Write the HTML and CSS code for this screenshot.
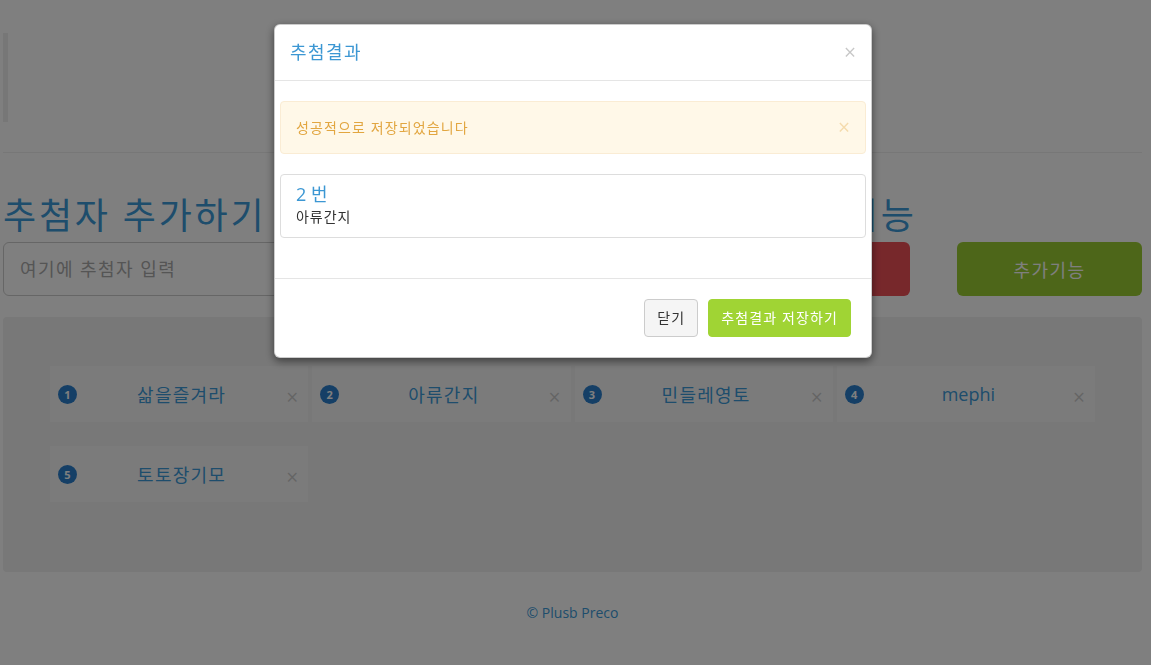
FILE: index.html
```html
<!DOCTYPE html>
<html lang="ko">
  <head>
    <meta charset="UTF-8" />
    <meta name="viewport" content="width=device-width, initial-scale=1.0" />
    <title>추첨</title>
    <link rel="stylesheet" href="styles.css">
  </head>
  <body>
    <div class="page">
      <div class="notice"></div>
      <hr class="divider">
      <div class="main">
        <section class="add-box">
          <h1 class="title">추첨자 추가하기</h1>
          <input class="name-input" type="text" placeholder="여기에 추첨자 입력">
        </section>
        <section class="tool-box">
          <h1 class="title">당첨자 기능</h1>
          <div class="tool-btns">
            <button class="btn-big btn-red">추첨하기</button>
            <button class="btn-big btn-green">추가기능</button>
          </div>
        </section>
      </div>
      <div class="well">
        <ul class="people">
          <li class="person"><span class="num">1</span><span class="name">삶을즐겨라</span><span class="del">&times;</span></li>
          <li class="person"><span class="num">2</span><span class="name">아류간지</span><span class="del">&times;</span></li>
          <li class="person"><span class="num">3</span><span class="name">민들레영토</span><span class="del">&times;</span></li>
          <li class="person"><span class="num">4</span><span class="name latin">mephi</span><span class="del">&times;</span></li>
          <li class="person"><span class="num">5</span><span class="name">토토장기모</span><span class="del">&times;</span></li>
        </ul>
      </div>
      <p class="copy">&copy; Plusb Preco</p>
    </div>

    <!-- 추첨 결과 모달 -->
    <div class="backdrop"></div>
    <div class="modal">
      <div class="modal-head">
        <h4 class="modal-title">추첨결과</h4>
        <button class="close">&times;</button>
      </div>
      <div class="modal-body">
        <div class="alert">
          <span>성공적으로 저장되었습니다</span>
          <button class="close alert-close">&times;</button>
        </div>
        <div class="result">
          <h4 class="result-no">2 번</h4>
          <p class="result-name">아류간지</p>
        </div>
      </div>
      <div class="modal-foot">
        <button class="btn btn-light">닫기</button>
        <button class="btn btn-save">추첨결과 저장하기</button>
      </div>
    </div>
  </body>
</html>
```

FILE: styles.css
```css
* {
  box-sizing: border-box;
}
body {
  margin: 0;
  background: #fff;
  color: #333;
  font-family: "Open Sans", "Noto Sans CJK KR", sans-serif;
  font-size: 14px;
}
/* 한글 글자폭 맞추기 : letter-spacing 은 각 요소에서 em 으로 */
.page {
  padding: 33px 9px 0 3px;
}
.notice {
  height: 89px;
  border-left: 5px solid #eee;
}
.divider {
  margin: 30px 0 43px;
  border: 0;
  border-top: 1px solid #eee;
}
.main {
  display: grid;
  grid-template-columns: 1fr 417px;
  column-gap: 47px;
}
.title {
  margin: 0 0 6px;
  font-size: 36px;
  font-weight: 400;
  line-height: 40px;
  color: #3c9ad8;
  white-space: nowrap;
  letter-spacing: 0.077em;
}
.name-input {
  width: 100%;
  height: 54px;
  padding: 0 16px;
  border: 1px solid #ccc;
  border-radius: 6px;
  font-family: inherit;
  font-size: 18px;
  letter-spacing: 0.08em;
}
.name-input::placeholder {
  color: #aaa;
}
.tool-btns {
  display: grid;
  grid-template-columns: 1fr 1fr;
  column-gap: 47px;
}
.btn-big {
  height: 54px;
  border: 0;
  border-radius: 6px;
  color: #fff;
  font-family: inherit;
  font-size: 18px;
  letter-spacing: 0.08em;
}
.btn-red {
  background: #ee5057;
}
.btn-green {
  background: #9acd32;
}
.well {
  height: 255px;
  margin-top: 21px;
  padding: 49px 47px 0;
  background: #f0f0f0;
  border-radius: 4px;
}
.people {
  list-style: none;
  margin: 0;
  padding: 0;
  display: grid;
  grid-template-columns: repeat(4, 1fr);
  column-gap: 4px;
  row-gap: 24px;
}
.person {
  display: flex;
  align-items: center;
  height: 56px;
  padding: 0 10px 0 8px;
  background: #f7f7f7;
}
.num {
  width: 19px;
  height: 19px;
  border-radius: 50%;
  background: #2a7fcc;
  color: #fff;
  font-size: 11px;
  font-weight: bold;
  line-height: 19px;
  text-align: center;
}
.name {
  flex: 1;
  text-align: center;
  font-size: 18px;
  color: #3c9ad8;
  letter-spacing: 0.07em;
}
.name.latin {
  letter-spacing: 0;
}
.del {
  margin-top: 6px;
  font-size: 21px;
  line-height: 1;
  color: #000;
  opacity: 0.18;
}
.copy {
  margin: 31px 0 0;
  text-align: center;
  font-size: 14px;
  line-height: 20px;
  color: #3c9ad8;
}

/* 모달 */
.backdrop {
  position: fixed;
  top: 0;
  right: 0;
  bottom: 0;
  left: 0;
  background: rgba(0, 0, 0, 0.5);
}
.modal {
  position: fixed;
  top: 24px;
  left: 274px;
  width: 598px;
  background: #fff;
  border: 1px solid rgba(0, 0, 0, 0.2);
  border-radius: 6px;
  box-shadow: 0 3px 9px rgba(0, 0, 0, 0.5);
}
.modal-head {
  display: flex;
  justify-content: space-between;
  align-items: center;
  padding: 15px;
  border-bottom: 1px solid #e5e5e5;
}
.modal-title {
  margin: 0;
  font-size: 18px;
  font-weight: 400;
  line-height: 25px;
  color: #3c97d3;
  letter-spacing: 0.08em;
}
.close {
  padding: 0;
  border: 0;
  background: none;
  font-family: inherit;
  font-size: 21px;
  line-height: 1;
  color: #000;
  opacity: 0.22;
}
.alert-close {
  color: #e2a640;
  opacity: 0.35;
}
.modal-body {
  padding: 20px 5px;
}
.alert {
  display: flex;
  justify-content: space-between;
  align-items: center;
  margin-bottom: 20px;
  padding: 15px;
  background: #fff8e8;
  border: 1px solid #faecd4;
  border-radius: 4px;
  color: #e2a640;
  line-height: 20px;
  letter-spacing: 0.08em;
}
.result {
  margin-bottom: 20px;
  padding: 8px 15px 10px;
  border: 1px solid #ddd;
  border-radius: 4px;
}
.result-no {
  margin: 0 0 2px;
  font-size: 18px;
  font-weight: 400;
  line-height: 22px;
  color: #3c97d3;
}
.result-name {
  margin: 0;
  line-height: 20px;
  letter-spacing: 0.07em;
}
.modal-foot {
  display: flex;
  justify-content: flex-end;
  gap: 10px;
  padding: 20px;
  border-top: 1px solid #e5e5e5;
}
.btn {
  padding: 8px 12px;
  border: 1px solid transparent;
  border-radius: 4px;
  font-family: inherit;
  font-size: 14px;
  line-height: 20px;
  letter-spacing: 0.08em;
}
.btn-light {
  background: #f5f5f5;
  border-color: #ccc;
  color: #333;
}
.btn-save {
  background: #a0d434;
  border-color: #a0d434;
  color: #fff;
}
```
